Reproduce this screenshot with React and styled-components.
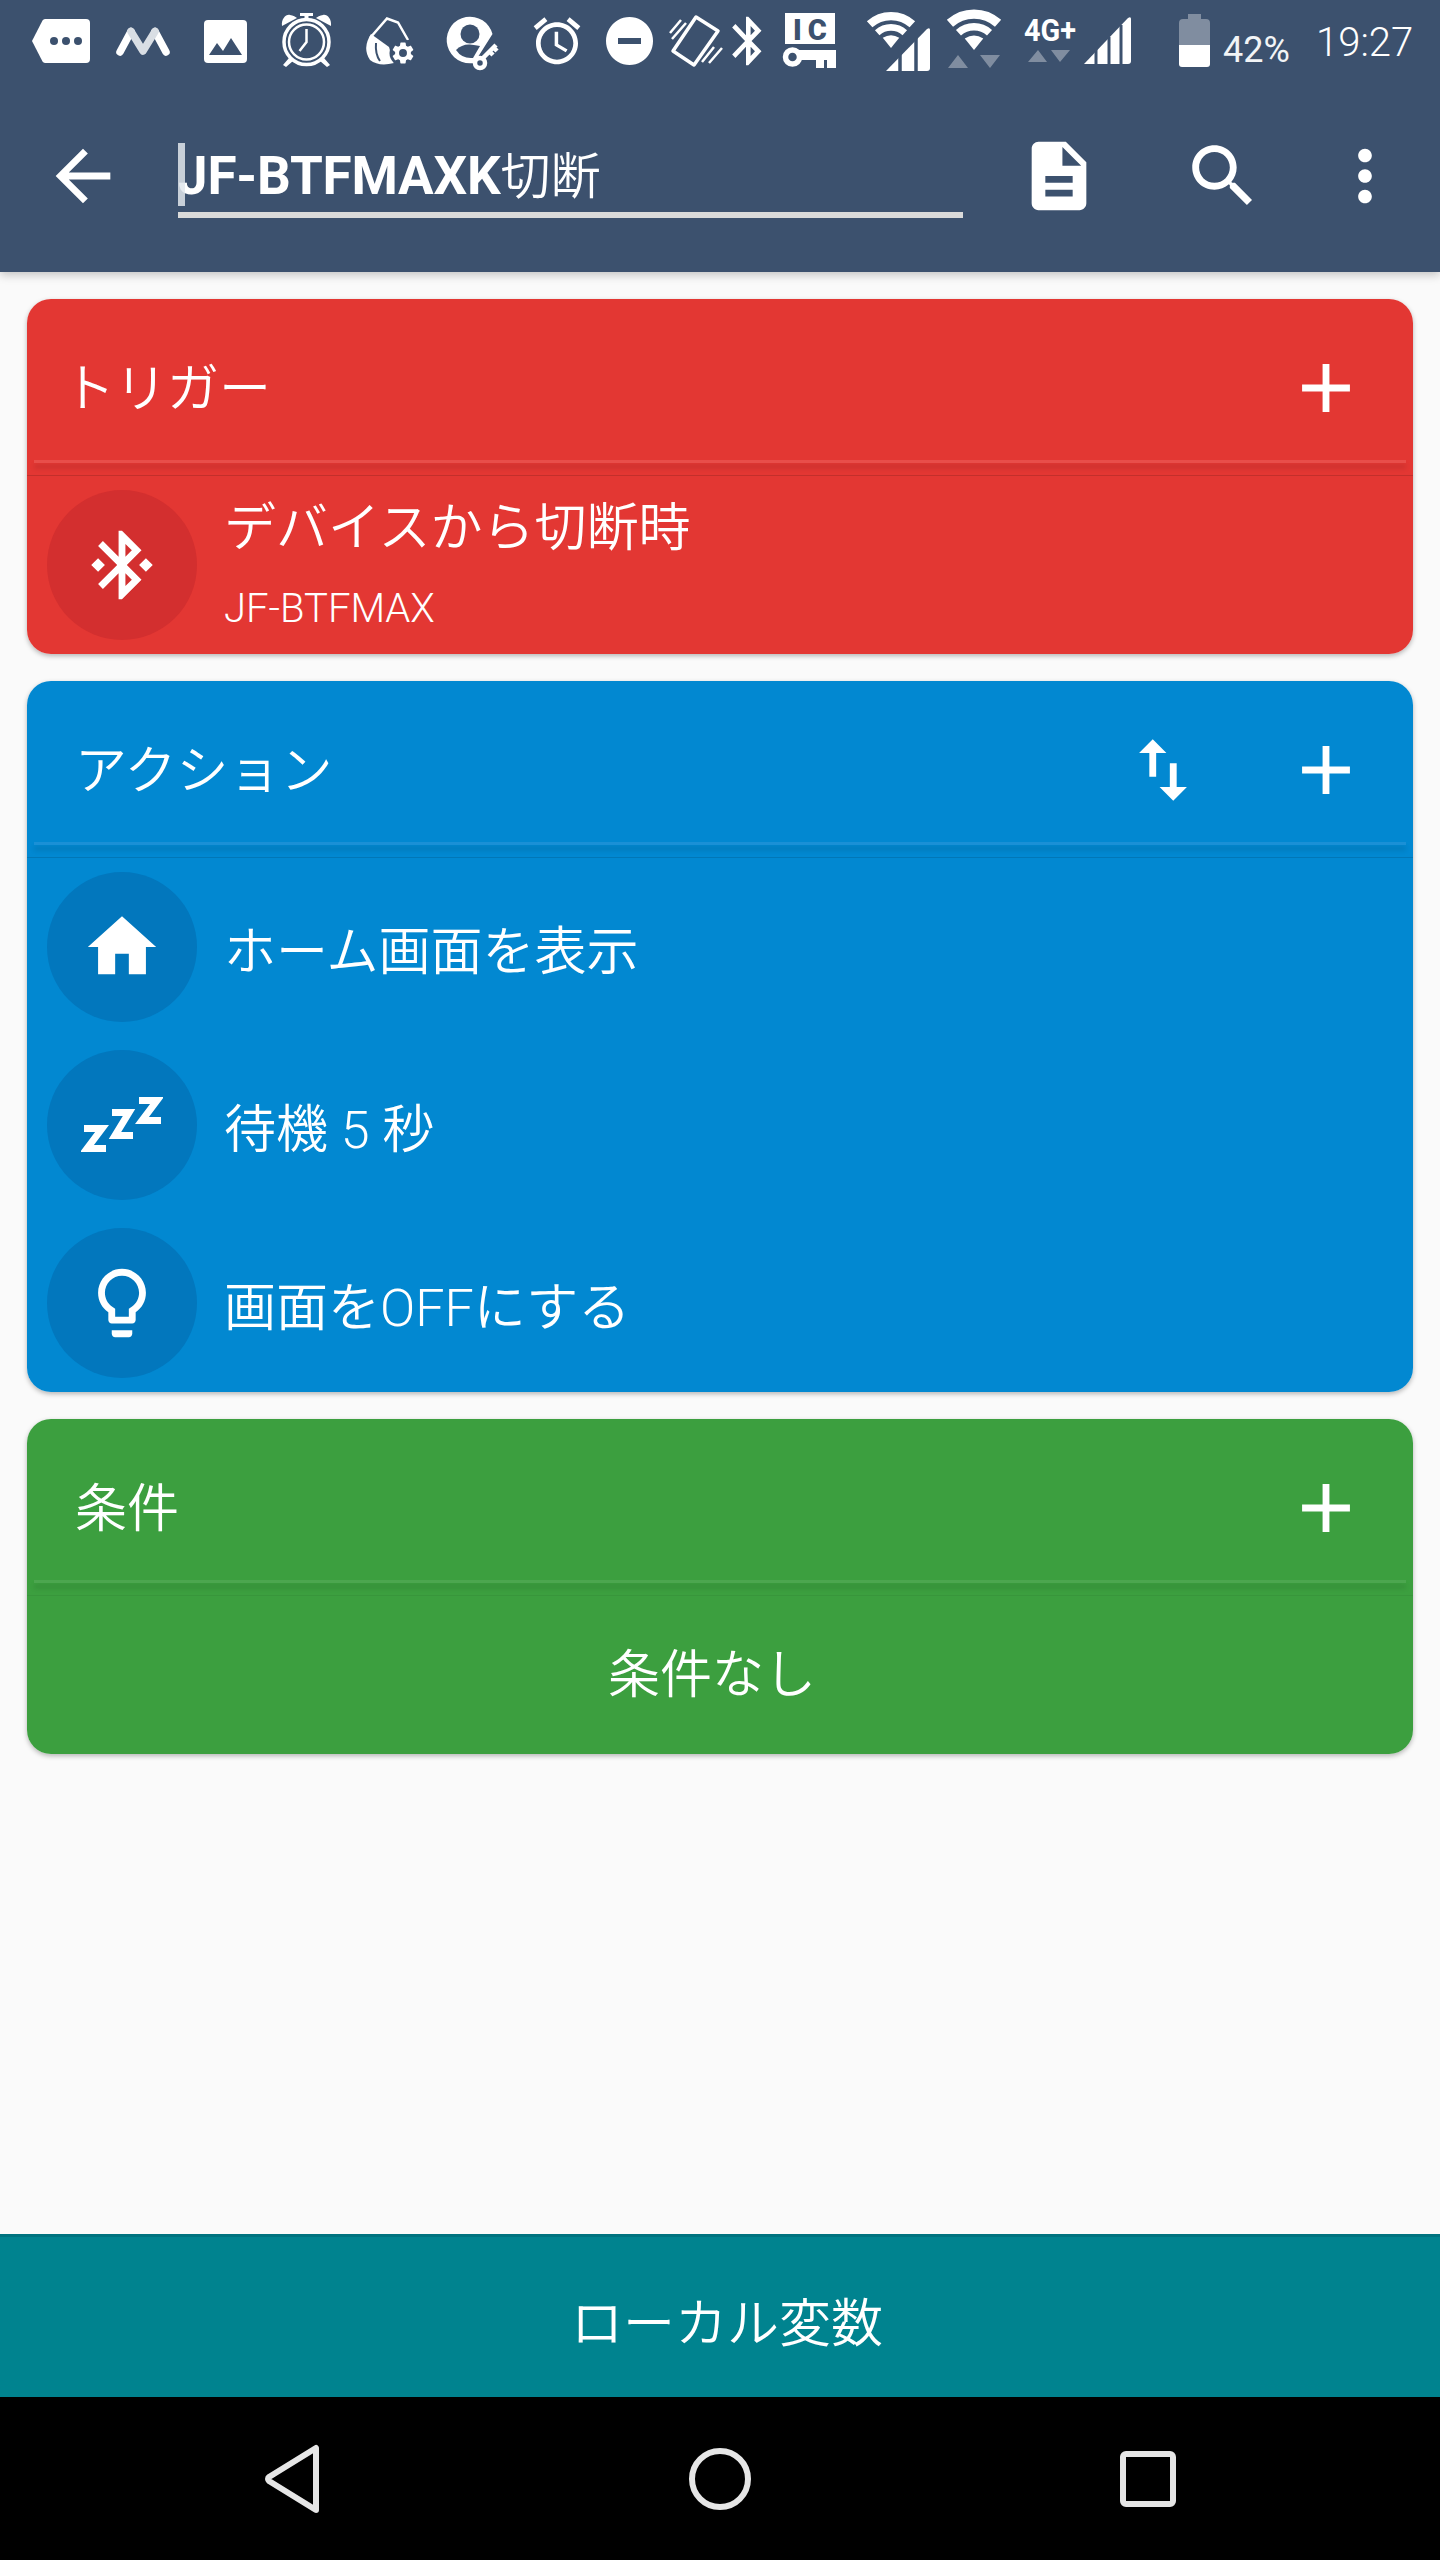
import React from 'react';
import styled, { createGlobalStyle } from 'styled-components';

const BAR = '#3c516e';
const FONT = `Roboto, "Noto Sans CJK JP", sans-serif`;

const Global = createGlobalStyle`
  html, body { margin: 0; padding: 0; background: #fafafa; }
  body { font-family: ${FONT}; }
`;

const Phone = styled.div`
  width: 1440px; height: 2560px; display: flex; flex-direction: column; overflow: hidden;
  background: #fafafa; color: #fff; font-family: ${FONT};
`;
const TopArea = styled.header`
  background: ${BAR}; height: 272px; flex: none; display: flex; flex-direction: column;
  box-shadow: 0 3px 9px rgba(0,0,0,.22); position: relative; z-index: 2;
`;
const StatusBar = styled.div`
  height: 88px; display: flex; align-items: flex-start; flex: none;
`;
const StatusIcon = styled.svg`
  flex: none; display: block; margin-left: ${p => p.$gap}px; margin-top: ${p => p.$top}px; fill: #fff; overflow: visible;
`;
const BatteryText = styled.span`
  font-family: Roboto, sans-serif; font-size: 36px; line-height: 36px; margin-left: 13px; margin-top: 32px; width: 66px; flex: none; color: #f2f4f6;
`;
const Clock = styled.span`
  font-family: Roboto, sans-serif; font-weight: 300; font-size: 40px; line-height: 40px; margin-left: 27px; margin-top: 23px; flex: none;
`;
const AppBar = styled.div`
  height: 184px; display: flex; align-items: flex-start; padding-left: 42px; flex: none;
`;
const BarIcon = styled.svg`
  width: 82px; height: 82px; flex: none; fill: #fff; margin-left: ${p => p.$ml || 0}px; margin-top: 47px; display: block;
`;
const TitleField = styled.div`
  width: 785px; height: 72px; margin-left: 54px; margin-top: 52px; border-bottom: 6px solid #dadada;
  font-size: 50px; line-height: 72px; white-space: nowrap; position: relative; flex: none; font-weight: 350;
  b { font-weight: 700; font-size: 53px; letter-spacing: -0.2px; }
`;
const Caret = styled.i`
  position: absolute; left: 0; top: 3px; width: 7px; height: 63px; background: rgba(225,230,236,.85);
`;
const Content = styled.main`
  flex: 1; padding: 27px; display: flex; flex-direction: column; gap: 27px; align-items: stretch;
`;
const Card = styled.section`
  background: ${p => p.$bg}; border-radius: 24px; overflow: hidden; flex: none;
`;
const CardWrap = styled.div`
  border-radius: 24px; box-shadow: 0 2px 5px rgba(0,0,0,.28);
`;
const CardHead = styled.div`
  height: 161px; box-sizing: border-box; display: flex; align-items: center;
  padding: 16px 46px 0 ${p => p.$pl}px;
`;
const CardTitle = styled.h2`
  flex: 1; margin: 0; font-weight: 350; font-size: 52px; line-height: 70px; padding-top: 4px;
`;
const HeadIcon = styled.svg`
  width: 82px; height: 82px; fill: #fff; flex: none; margin-left: ${p => p.$ml || 0}px;
`;
const Divider = styled.div`
  height: 16px; box-sizing: border-box; overflow: hidden; border-bottom: 1px solid rgba(0,0,0,${p => p.$line});
`;
const DividerLight = styled.div`
  height: 3px; margin: 0 7px; background: ${p => p.$light}; box-shadow: 0 5px 5px rgba(0,0,0,.15);
`;
const Row = styled.div`
  height: 178px; display: flex; align-items: center; padding-left: 20px; gap: 28px;
`;
const Circle = styled.div`
  width: 150px; height: 150px; border-radius: 50%; background: ${p => p.$bg}; flex: none;
  display: flex; align-items: center; justify-content: center;
`;
const CircleIcon = styled.svg`
  width: 82px; height: 82px; fill: #fff; display: block;
`;
const RowText = styled.div`
  display: flex; flex-direction: column; margin-top: ${p => p.$mt ?? 12}px;
`;
const RowTitle = styled.div`
  font-size: 52px; line-height: 70px; font-weight: 350; white-space: nowrap; margin-left: -1px;
`;
const RowSub = styled.div`
  font-size: 40px; line-height: 46px; margin-top: 22px; font-weight: 350; margin-left: -1px;
`;
const Empty = styled.div`
  height: 158px; display: flex; align-items: center; justify-content: center; font-size: 52px;
  font-weight: 350; padding: 0 16px 10px 0; box-sizing: border-box;
`;
const BottomBar = styled.footer`
  height: 163px; flex: none; background: #00838f; border-top: 3px solid #00737f; box-sizing: border-box;
  display: flex; align-items: center; justify-content: center; font-size: 52px; font-weight: 350; padding: 4px 0 0 14px;
`;
const NavBar = styled.nav`
  height: 163px; flex: none; background: #000; display: grid; grid-template-columns: repeat(3, 427px);
  padding: 0 79px; align-items: center; justify-items: center;
`;
const NavIcon = styled.svg`
  width: 70px; height: 70px; fill: none; stroke: #e6e6e6; stroke-width: 6; display: block; overflow: visible;
`;

const arc = (cx, cy, r, a = 42) => {
  const s = Math.sin(a * Math.PI / 180) * r, c = Math.cos(a * Math.PI / 180) * r;
  return `M${cx - s} ${cy - c}A${r} ${r} 0 0 1 ${cx + s} ${cy - c}`;
};
const Wifi = ({ cx, cy, k = 1 }) => (
  <g>
    <path d={arc(cx, cy, 31 * k)} fill="none" stroke="#fff" strokeWidth={8 * k} />
    <path d={arc(cx, cy, 20 * k)} fill="none" stroke="#fff" strokeWidth={6.5 * k} />
    <path d={`M${cx} ${cy}L${cx - 8 * k} ${cy - 10 * k}Q${cx} ${cy - 15 * k} ${cx + 8 * k} ${cy - 10 * k}Z`} />
  </g>
);

const P = {
  back: 'M20 11H7.83l5.59-5.59L12 4l-8 8 8 8 1.41-1.41L7.83 13H20v-2z',
  doc: 'M14 2H6c-1.1 0-1.99.9-1.99 2L4 20c0 1.1.89 2 1.99 2H18c1.1 0 2-.9 2-2V8l-6-6zm2 16H8v-2h8v2zm0-4H8v-2h8v2zm-3-5V3.5L18.5 9H13z',
  search: 'M15.5 14h-.79l-.28-.27C15.41 12.59 16 11.11 16 9.5 16 5.91 13.09 3 9.5 3S3 5.91 3 9.5 5.91 16 9.5 16c1.61 0 3.09-.59 4.23-1.57l.27.28v.79l5 4.99L20.49 19l-4.99-5zm-6 0C7.01 14 5 11.99 5 9.5S7.01 5 9.5 5 14 7.01 14 9.5 11.99 14 9.5 14z',
  more: 'M12 8c1.1 0 2-.9 2-2s-.9-2-2-2-2 .9-2 2 .9 2 2 2zm0 2c-1.1 0-2 .9-2 2s.9 2 2 2 2-.9 2-2-.9-2-2-2zm0 6c-1.1 0-2 .9-2 2s.9 2 2 2 2-.9 2-2-.9-2-2-2z',
  plus: 'M19 13h-6v6h-2v-6H5v-2h6V5h2v6h6v2z',
  swap: 'M16 17.01V10h-2v7.01h-3L15 21l4-3.99h-3zM9 3L5 6.99h3V14h2V6.99h3L9 3z',
  btc: 'M7 12l-2-2-2 2 2 2 2-2zm10.71-4.29L12 2h-1v7.59L6.41 5 5 6.41 10.59 12 5 17.59 6.41 19 11 14.41V22h1l5.71-5.71-4.3-4.29 4.3-4.29zM13 5.83l1.88 1.88L13 9.59V5.83zm1.88 10.46L13 18.17v-3.76l1.88 1.88zM19 10l-2 2 2 2 2-2-2-2z',
  home: 'M10 20v-6h4v6h5v-8h3L12 3 2 12h3v8z',
  bulb: 'M9 21c0 .55.45 1 1 1h4c.55 0 1-.45 1-1v-1H9v1zm3-19C8.14 2 5 5.14 5 9c0 2.38 1.19 4.47 3 5.74V17c0 .55.45 1 1 1h6c.55 0 1-.45 1-1v-2.26c1.81-1.27 3-3.36 3-5.74 0-3.86-3.14-7-7-7zm2.85 11.1l-.85.6V16h-4v-2.3l-.85-.6C7.8 12.16 7 10.63 7 9c0-2.76 2.24-5 5-5s5 2.24 5 5c0 1.63-.8 3.16-2.15 4.1z',
  alarm: 'M22 5.72l-4.6-3.86-1.29 1.53 4.6 3.86L22 5.72zM7.88 3.39L6.6 1.86 2 5.71l1.29 1.53 4.59-3.85zM12.5 8H11v6l4.75 2.85.75-1.23-4-2.37V8zM12 4c-4.97 0-9 4.03-9 9s4.03 9 9 9 9-4.03 9-9-4.03-9-9-9zm0 16c-3.87 0-7-3.13-7-7s3.13-7 7-7 7 3.13 7 7-3.13 7-7 7z',
  bt: 'M17.71 7.71L12 2h-1v7.59L6.41 5 5 6.41 10.59 12 5 17.59 6.41 19 11 14.41V22h1l5.71-5.71-4.3-4.29 4.3-4.29zM13 5.83l1.88 1.88L13 9.59V5.83zm1.88 10.46L13 18.17v-3.76l1.88 1.88z',
  gear: 'M19.14 12.94c.04-.3.06-.61.06-.94s-.02-.64-.07-.94l2.03-1.58a.49.49 0 0 0 .12-.61l-1.92-3.32a.49.49 0 0 0-.59-.22l-2.39.96c-.5-.38-1.03-.7-1.62-.94l-.36-2.54a.48.48 0 0 0-.48-.41h-3.84c-.24 0-.43.17-.47.41l-.36 2.54c-.59.24-1.13.57-1.62.94l-2.39-.96a.49.49 0 0 0-.59.22L2.74 8.87c-.12.21-.08.47.12.61l2.03 1.58c-.05.3-.09.63-.09.94s.02.64.07.94l-2.03 1.58a.49.49 0 0 0-.12.61l1.92 3.32c.12.22.37.29.59.22l2.39-.96c.5.38 1.03.7 1.62.94l.36 2.54c.05.24.24.41.48.41h3.84c.24 0 .44-.17.47-.41l.36-2.54c.59-.24 1.13-.56 1.62-.94l2.39.96c.22.08.47 0 .59-.22l1.92-3.32a.49.49 0 0 0-.12-.61l-2.01-1.58zM12 15.6A3.6 3.6 0 1 1 12 8.4a3.6 3.6 0 0 1 0 7.2z',
};

const Tile = ({ d, bg }) => (
  <Circle $bg={bg}><CircleIcon viewBox="0 0 24 24"><path d={d} /></CircleIcon></Circle>
);

const Zzz = ({ bg }) => (
  <Circle $bg={bg}>
    <CircleIcon viewBox="0 0 82 82">
      <g fill="none" stroke="#fff" strokeWidth="7">
        <path d="M3 44.500h18L6 64.500h19" />
        <path d="M31 28.500h17L34 51.500h18" />
        <path d="M58 16.500h18L61 36.500h19" />
      </g>
    </CircleIcon>
  </Circle>
);

function StatusIcons() {
  return (
    <>
      <StatusIcon $gap={32} $top={19} width="58" height="44" viewBox="0 0 58 44">
        <path d="M13 0h41a4 4 0 0 1 4 4v36a4 4 0 0 1-4 4H13a3 3 0 0 1-2.500-1.500L0 22 10.500 1.500A3 3 0 0 1 13 0z" />
        <g fill={BAR}><circle cx="22" cy="22" r="4" /><circle cx="34" cy="22" r="4" /><circle cx="46" cy="22" r="4" /></g>
      </StatusIcon>
      <StatusIcon $gap={26} $top={27} width="54" height="29" viewBox="0 0 54 29">
        <g fill="none" strokeLinejoin="round" strokeLinecap="round" strokeWidth="7.500">
          <path d="M4 25L15 4.500" stroke="#fff" />
          <path d="M50 25L39 4.500" stroke="#fff" />
          <path d="M15 4.500L27 24 39 4.500" stroke="#d9dee4" />
        </g>
      </StatusIcon>
      <StatusIcon $gap={34} $top={20} width="43" height="43" viewBox="0 0 43 43">
        <rect width="43" height="43" rx="4" />
        <path fill={BAR} d="M5 35l8-12 6 8 8-13 11 17z" />
      </StatusIcon>
      <StatusIcon $gap={34} $top={13} width="52" height="55" viewBox="0 0 52 55">
        <circle cx="25.500" cy="29" r="22.500" fill="none" stroke="#fff" strokeWidth="3.500" />
        <circle cx="25.500" cy="29" r="17.500" fill="none" stroke="#fff" strokeWidth="2.500" />
        <path d="M25.500 16v13l-7 9" fill="none" stroke="#fff" strokeWidth="2.500" />
        <path d="M1 13C0 6 5 1 9 2c3 .5 6 2 7 3zM50 13c1-7-4-12-8-11-3 .5-6 2-7 3z" />
        <path d="M19 0h13v3h-4.500v3h-4V3H19zM8 45l4 3-7 6-3-2zM43 45l-4 3 7 6 3-2z" />
      </StatusIcon>
      <StatusIcon $gap={32} $top={17} width="48" height="48" viewBox="0 0 48 48">
        <path d="M5 21L22 1.500l11 4L43 23" fill="none" stroke="#fff" strokeWidth="2.500" />
        <path d="M6 17L24 30l5 16q-15 4-24-3Q-3 31 6 17z" />
        <path d="M11 26q-1 11 4 18" fill="none" stroke={BAR} strokeWidth="2" />
        <circle cx="38" cy="36" r="13.500" fill={BAR} />
        <path transform="translate(24.800 22.800) scale(1.1)" d={P.gear} />
      </StatusIcon>
      <StatusIcon $gap={33} $top={17} width="54" height="53" viewBox="0 0 54 53">
        <path d="M46.500 17A23.300 23.300 0 1 0 24 46.300h4z" />
        <circle cx="24" cy="17" r="9.500" fill={BAR} />
        <path fill={BAR} d="M10 33q6-6 14-5.500 6 .5 10 1.500l-7 12q-11 1-17-8z" />
        <circle cx="34" cy="46" r="5" fill={BAR} stroke="#fff" strokeWidth="4.500" />
        <path d="M37 41l13-13M43 34l4 4M47 30l4 4" fill="none" stroke="#fff" strokeWidth="4.500" />
      </StatusIcon>
      <StatusIcon $gap={29} $top={13} width="56" height="56" viewBox="0 0 24 24"><path d={P.alarm} /></StatusIcon>
      <StatusIcon $gap={21} $top={17} width="47" height="48" viewBox="0 0 47 48">
        <path fillRule="evenodd" d="M23.500 0a23.500 24 0 1 0 .01 0zM12 21h23v6H12z" />
      </StatusIcon>
      <StatusIcon $gap={16} $top={15} width="52" height="52" viewBox="0 0 52 52">
        <g fill="none" stroke="#fff" strokeLinejoin="round">
          <path strokeWidth="3.500" d="M27 2l22 14-24 34L4 36z" />
          <path strokeWidth="2.500" d="M1 18L12 5M3 24L17 8M33 47l12-15M40 48l13-15" />
        </g>
      </StatusIcon>
      <StatusIcon $gap={10} $top={12} width="30" height="58" viewBox="3.500 0 13 24" preserveAspectRatio="none"><path d={P.bt} transform="translate(-1 0)" /></StatusIcon>
      <StatusIcon $gap={22} $top={13} width="53" height="56" viewBox="0 0 53 56">
        <path d="M2 0h50v31H2z" />
        <text x="10" y="27" fontFamily="Roboto, sans-serif" fontWeight="900" fontSize="29" letterSpacing="6" fill={BAR}>IC</text>
        <circle cx="9.500" cy="44" r="7" fill="none" stroke="#fff" strokeWidth="5.500" />
        <path d="M16 37h37v18h-9v-8h-3v8h-8v-8H16z" />
      </StatusIcon>
      <StatusIcon $gap={30} $top={11} width="64" height="60" viewBox="0 0 64 60">
        <Wifi cx={25} cy={37} k={1.03} />
        <path d="M20 60l41-42q3-2 3 1v38q0 3-3 3z" />
        <path d="M34 60V40M50 60V25" stroke={BAR} strokeWidth="3.500" />
      </StatusIcon>
      <StatusIcon $gap={17} $top={10} width="54" height="58" viewBox="0 0 54 58">
        <Wifi cx={27} cy={40} k={1.16} />
        <path d="M11 45l10 13H1zM43 58L33 45h20z" opacity=".35" />
      </StatusIcon>
      <StatusIcon $gap={23} $top={15} width="52" height="50" viewBox="0 0 52 50">
        <text x="0" y="26" fontFamily="Roboto, sans-serif" fontWeight="700" fontSize="31" textLength="52" lengthAdjust="spacingAndGlyphs">4G+</text>
        <path d="M14 35l9 12H4zM36 47L27 35h19z" opacity=".35" />
      </StatusIcon>
      <StatusIcon $gap={8} $top={17} width="47" height="47" viewBox="0 0 47 47">
        <path d="M0 47L44 1q3-2 3 1v42q0 3-3 3z" />
        <path d="M12 47V30M25 47V20M37 47V8" stroke={BAR} strokeWidth="3" />
      </StatusIcon>
      <StatusIcon $gap={48} $top={14} width="31" height="53" viewBox="0 0 31 53">
        <path opacity=".35" d="M9 0h13v5h5a4 4 0 0 1 4 4v22H0V9a4 4 0 0 1 4-4h5z" />
        <path d="M0 31h31v19a3 3 0 0 1-3 3H3a3 3 0 0 1-3-3z" />
      </StatusIcon>
      <BatteryText>42%</BatteryText>
      <Clock>19:27</Clock>
    </>
  );
}

const RED = { bg: '#e33733', line: '.14', light: '#e84e4a' };
const BLUE = { bg: '#0288d1', line: '.12', light: '#1a90d6' };
const GREEN = { bg: '#3c9f3f', line: '.05', light: '#4ca64f' };

const Sep = ({ c }) => (
  <Divider $line={c.line}><DividerLight $light={c.light} /></Divider>
);

export default function App() {
  return (
    <Phone>
      <Global />
      <TopArea>
        <StatusBar><StatusIcons /></StatusBar>
        <AppBar>
          <BarIcon viewBox="0 0 24 24"><path d={P.back} /></BarIcon>
          <TitleField><Caret /><b>JF-BTFMAXK</b>切断</TitleField>
          <BarIcon $ml={55} viewBox="0 0 24 24"><path d={P.doc} /></BarIcon>
          <BarIcon $ml={82} viewBox="0 0 24 24"><path d={P.search} /></BarIcon>
          <BarIcon $ml={60} viewBox="0 0 24 24"><path d={P.more} /></BarIcon>
        </AppBar>
      </TopArea>
      <Content>
        <CardWrap>
          <Card $bg={RED.bg}>
            <CardHead $pl={36}>
              <CardTitle>トリガー</CardTitle>
              <HeadIcon viewBox="0 0 24 24"><path d={P.plus} /></HeadIcon>
            </CardHead>
            <Sep c={RED} />
            <Row>
              <Tile d={P.btc} bg="#d32f2f" />
              <RowText $mt={-4}>
                <RowTitle>デバイスから切断時</RowTitle>
                <RowSub>JF-BTFMAX</RowSub>
              </RowText>
            </Row>
          </Card>
        </CardWrap>
        <CardWrap>
          <Card $bg={BLUE.bg}>
            <CardHead $pl={48}>
              <CardTitle>アクション</CardTitle>
              <HeadIcon viewBox="0 0 24 24"><path d={P.swap} /></HeadIcon>
              <HeadIcon $ml={81} viewBox="0 0 24 24"><path d={P.plus} /></HeadIcon>
            </CardHead>
            <Sep c={BLUE} />
            <Row><Tile d={P.home} bg="#0277bd" /><RowText><RowTitle>ホーム画面を表示</RowTitle></RowText></Row>
            <Row><Zzz bg="#0277bd" /><RowText><RowTitle>待機 5 秒</RowTitle></RowText></Row>
            <Row><Tile d={P.bulb} bg="#0277bd" /><RowText><RowTitle>画面をOFFにする</RowTitle></RowText></Row>
          </Card>
        </CardWrap>
        <CardWrap>
          <Card $bg={GREEN.bg}>
            <CardHead $pl={48}>
              <CardTitle>条件</CardTitle>
              <HeadIcon viewBox="0 0 24 24"><path d={P.plus} /></HeadIcon>
            </CardHead>
            <Sep c={GREEN} />
            <Empty>条件なし</Empty>
          </Card>
        </CardWrap>
      </Content>
      <BottomBar>ローカル変数</BottomBar>
      <NavBar>
        <NavIcon viewBox="0 0 70 70"><path strokeLinejoin="round" d="M58 4v62L11 37a2.500 2.500 0 0 1 0-4z" /></NavIcon>
        <NavIcon viewBox="0 0 70 70"><circle cx="35" cy="35" r="28" /></NavIcon>
        <NavIcon viewBox="0 0 70 70"><rect x="11" y="10" width="50" height="50" rx="3" /></NavIcon>
      </NavBar>
    </Phone>
  );
}
